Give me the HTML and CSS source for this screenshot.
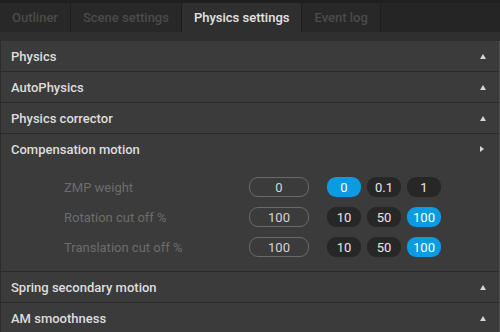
FILE: index.html
```html
<!DOCTYPE html>
<html>
<head>
<meta charset="utf-8">
<link rel="stylesheet" href="styles.css">
</head>
<body>
<div class="app">
  <div class="tabbar">
    <div class="tab">Outliner</div>
    <div class="tab">Scene settings</div>
    <div class="tab active">Physics settings</div>
    <div class="tab">Event log</div>
  </div>
  <div class="strip"></div>
  <div class="panel">
    <div class="section"><div class="header"><span>Physics</span><span class="arrow up"></span></div></div>
    <div class="section"><div class="header"><span>AutoPhysics</span><span class="arrow up"></span></div></div>
    <div class="section"><div class="header"><span>Physics corrector</span><span class="arrow up"></span></div></div>
    <div class="section open">
      <div class="header nob"><span>Compensation motion</span><span class="arrow right"></span></div>
      <div class="content">
        <div class="row">
          <div class="label">ZMP weight</div>
          <div class="input">0</div>
          <div class="toggles"><div class="tg on">0</div><div class="tg">0.1</div><div class="tg">1</div></div>
        </div>
        <div class="row">
          <div class="label">Rotation cut off %</div>
          <div class="input">100</div>
          <div class="toggles"><div class="tg">10</div><div class="tg">50</div><div class="tg on">100</div></div>
        </div>
        <div class="row">
          <div class="label">Translation cut off %</div>
          <div class="input">100</div>
          <div class="toggles"><div class="tg">10</div><div class="tg">50</div><div class="tg on">100</div></div>
        </div>
      </div>
    </div>
    <div class="section"><div class="header"><span>Spring secondary motion</span><span class="arrow up"></span></div></div>
    <div class="section"><div class="header"><span>AM smoothness</span><span class="arrow up"></span></div></div>
  </div>
</div>
</body>
</html>
```

FILE: styles.css
```css
* { box-sizing: border-box; }
html, body { margin: 0; padding: 0; }
body {
  background: #3b3b3b;
  font-family: Roboto, "Liberation Sans", sans-serif;
  font-size: 13px;
  overflow: hidden;
}
.app {
  width: 500px;
  height: 332px;
  overflow: hidden;
  border-top: 3px solid #1f1f1f;
  background: #3b3b3b;
}
.tabbar {
  display: flex;
  height: 29px;
  background: #252525;
}
.tab {
  height: 29px;
  padding: 0 12px;
  display: flex;
  align-items: center;
  color: #4b4b4b;
  font-weight: 500;
  background: #282828;
  border-right: 1px solid #1d1d1d;
}
.tab.active {
  background: #2f2f2f;
  color: #e4e4e4;
}
.strip {
  height: 9px;
  background: #2f2f2f;
}
.panel {
  border-left: 1px solid #2c2c2c;
  border-right: 1px solid #505050;
}
.section {
  border-bottom: 1px solid #2b2b2b;
}
.header {
  height: 30px;
  display: flex;
  align-items: center;
  justify-content: space-between;
  padding: 0 10px 0 10px;
  color: #dedede;
  font-weight: 500;
}
.arrow { width: 0; height: 0; display: block; }
.arrow.up {
  border-left: 3.5px solid transparent;
  border-right: 3.5px solid transparent;
  border-bottom: 5px solid #d6d6d6;
  margin-right: 3px;
}
.arrow.right {
  border-top: 3.5px solid transparent;
  border-bottom: 3.5px solid transparent;
  border-left: 4px solid #d6d6d6;
  margin-right: 5px;
}
.content {
  padding: 8px 0 9px 63px;
}
.row {
  height: 30px;
  display: flex;
  align-items: center;
}
.label {
  width: 185px;
  color: #6c6c6c;
}
.input {
  width: 60px;
  height: 20px;
  border: 1px solid #6a6a6a;
  border-radius: 9px;
  display: flex;
  align-items: center;
  justify-content: center;
  color: #d4d4d4;
}
.toggles {
  display: flex;
  gap: 6px;
  margin-left: 18px;
}
.tg {
  width: 34px;
  height: 20px;
  border-radius: 9px;
  background: #272727;
  color: #e8e8e8;
  display: flex;
  align-items: center;
  justify-content: center;
}
.tg.on {
  background: #0a9be3;
  color: #ffffff;
}
```
